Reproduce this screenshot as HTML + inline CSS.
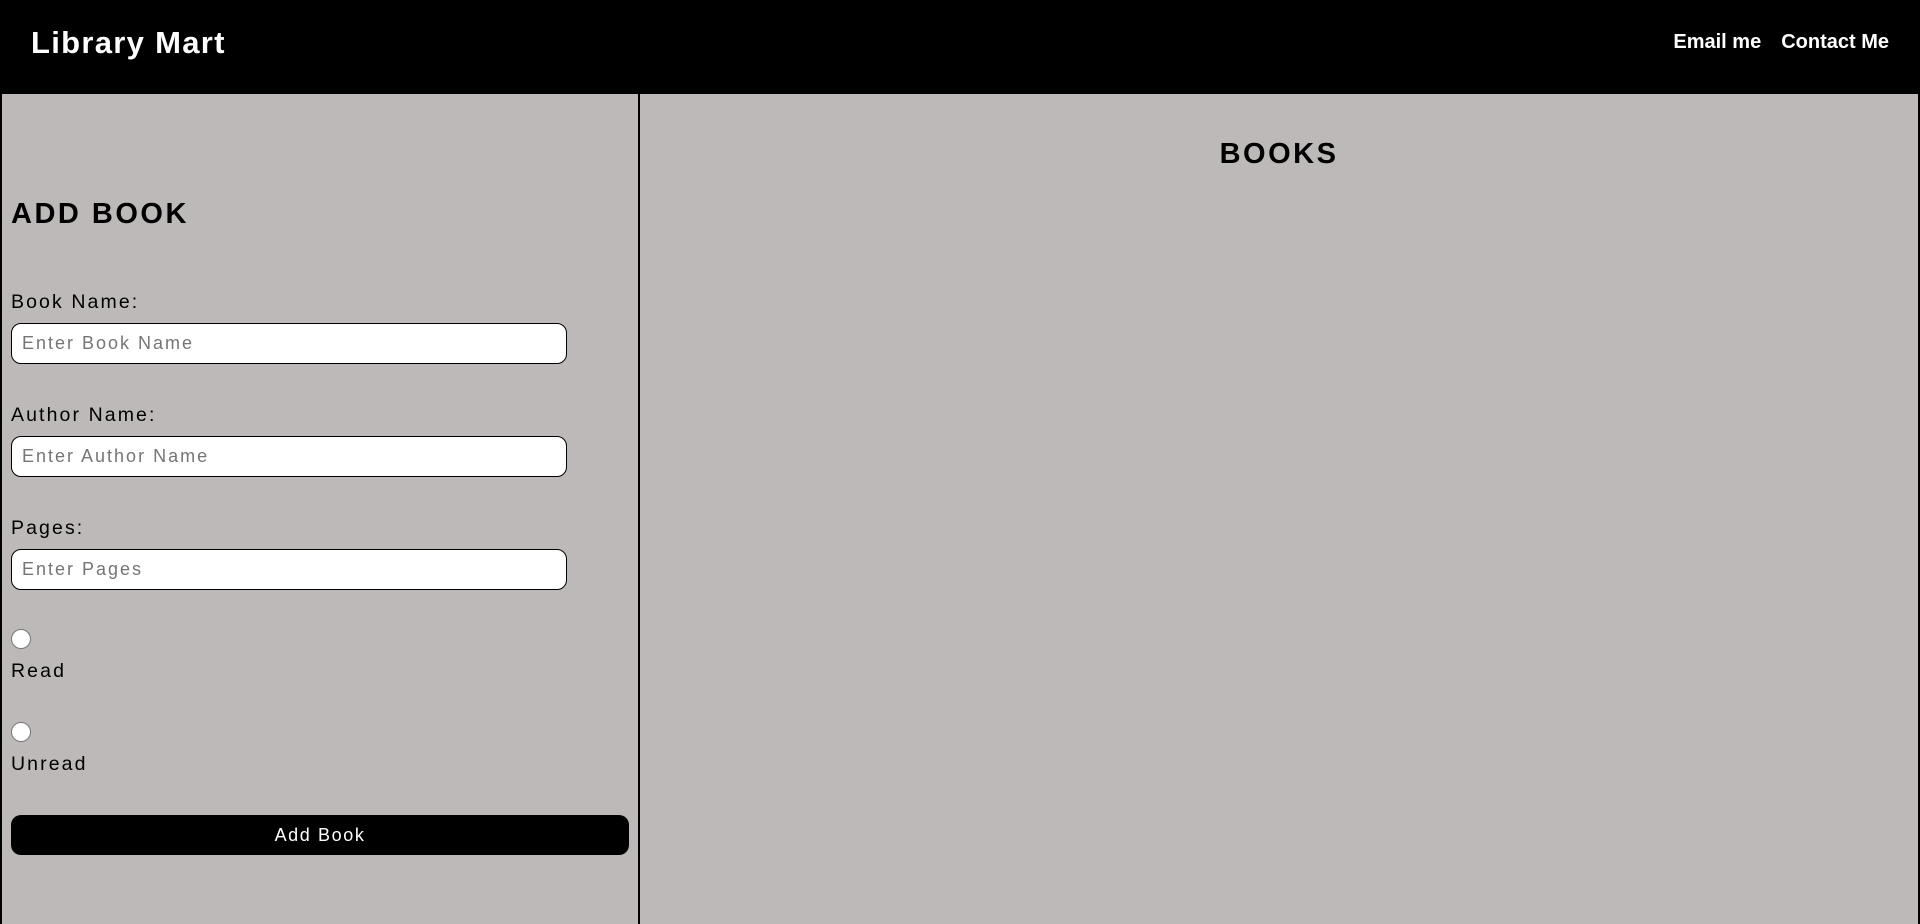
<!DOCTYPE html>
<html><head><meta charset="utf-8"><style>
*{box-sizing:border-box;margin:0;padding:0}
body{width:1920px;height:924px;overflow:hidden;background:#bdb9b8;font-family:"Liberation Sans",Arial,sans-serif;}
header{height:94px;background:#000;color:#fff;position:relative}
header h1{position:absolute;left:31px;top:25px;font-size:31px;font-weight:bold;letter-spacing:1.3px}
header nav{position:absolute;right:31px;top:31px;font-size:20px;font-weight:bold}
header nav span{margin-left:20px}
.left{position:absolute;left:0;top:94px;width:640px;height:830px;border-left:2px solid #000;border-right:2px solid #000}
.right{position:absolute;left:640px;top:94px;right:0;height:830px;border-right:2px solid #000}
h2{font-size:29px;font-weight:bold;letter-spacing:2.5px;position:absolute;color:#000}
.lbl{position:absolute;left:11px;font-size:19.5px;letter-spacing:2.1px;color:#000}
.inp{position:absolute;left:11px;width:556px;height:41px;background:#fff;border:1px solid #000;border-radius:10px;font-size:18px;letter-spacing:2px;color:#757575;padding:9px 0 0 10px}
.radio{position:absolute;left:11px;width:20px;height:20px;border-radius:50%;background:#fff;border:1px solid #767676}
.btn{position:absolute;left:11px;width:618px;height:40px;background:#000;border-radius:10px;color:#fff;font-size:18px;letter-spacing:1.6px;text-align:center;line-height:40px}
</style></head><body>
<header><h1>Library Mart</h1><nav><span>Email me</span><span>Contact Me</span></nav></header>
<div class="left">
<h2 style="left:9px;top:104px">ADD BOOK</h2>
<div class="lbl" style="top:197px;left:9px">Book Name:</div>
<div class="inp" style="top:229px;left:9px">Enter Book Name</div>
<div class="lbl" style="top:310px;left:9px">Author Name:</div>
<div class="inp" style="top:342px;left:9px">Enter Author Name</div>
<div class="lbl" style="top:423px;left:9px">Pages:</div>
<div class="inp" style="top:455px;left:9px">Enter Pages</div>
<div class="radio" style="top:535px;left:9px"></div>
<div class="lbl" style="top:566px;left:9px">Read</div>
<div class="radio" style="top:628px;left:9px"></div>
<div class="lbl" style="top:659px;left:9px">Unread</div>
<div class="btn" style="top:721px;left:9px">Add Book</div>
</div>
<div class="right"><h2 style="left:0;right:0;text-align:center;top:44px">BOOKS</h2></div>
</body></html>
